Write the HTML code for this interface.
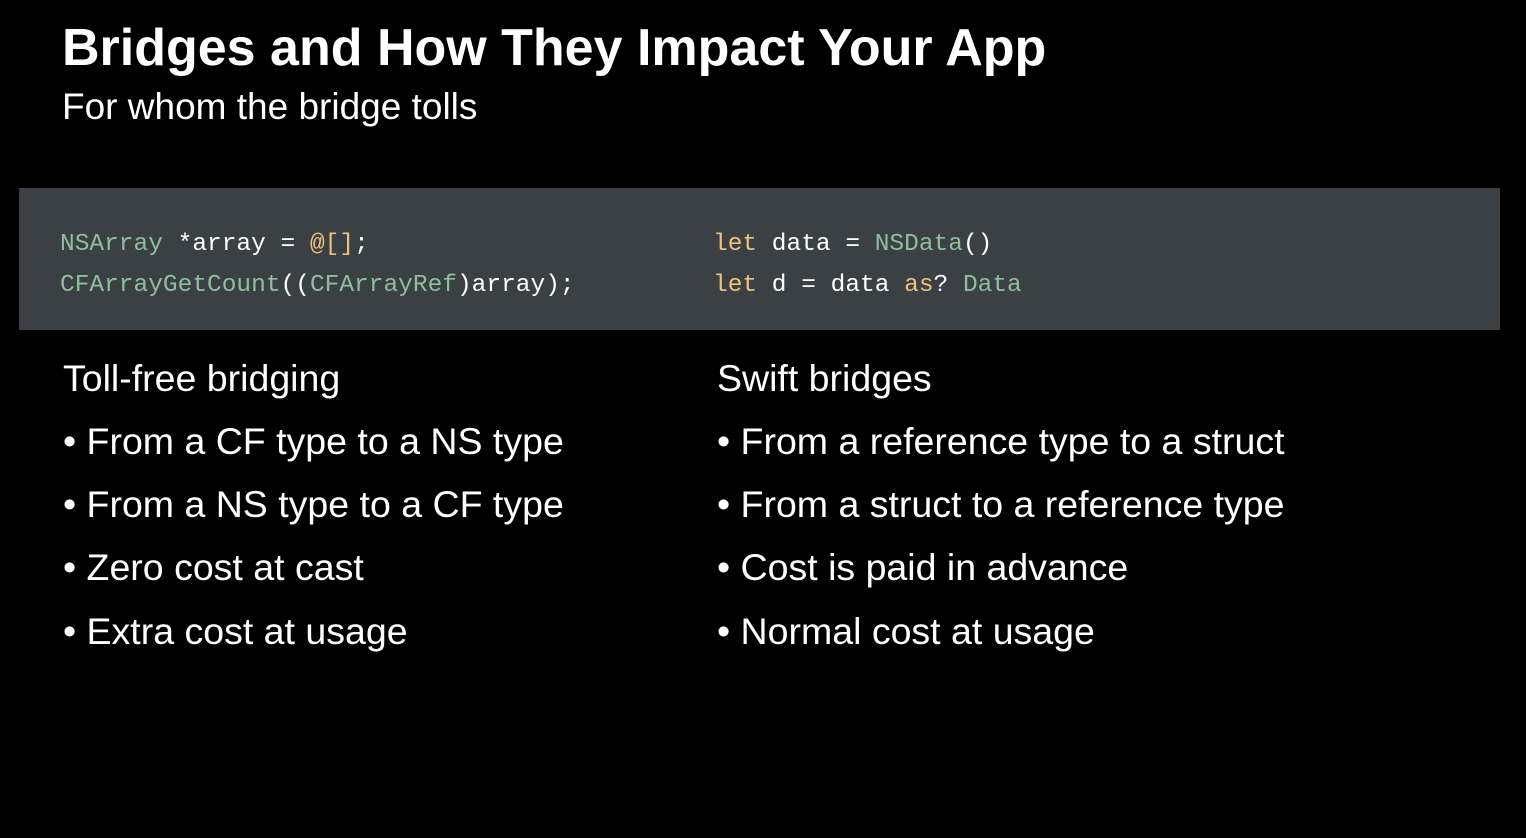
<!DOCTYPE html>
<html><head><meta charset="utf-8"><style>
body{margin:0;width:1526px;height:838px;background:#000;overflow:hidden;font-family:"Liberation Sans",sans-serif;color:#fff;position:relative}
.a{position:absolute;white-space:nowrap}
h1{position:absolute;left:62px;top:18px;margin:0;font-size:52px;font-weight:bold;letter-spacing:0}
.sub{left:62px;top:86px;font-size:37px}
.box{position:absolute;left:19px;top:188px;width:1481px;height:142px;background:#3b4045}
.code{font-family:"Liberation Mono",monospace;font-size:24.5px;line-height:41px;top:224px;color:#fff}
.g{color:#8fbf9a}.y{color:#eec27a}
.t{font-size:37.5px}
</style></head><body>
<h1>Bridges and How They Impact Your App</h1>
<div class="a sub">For whom the bridge tolls</div>
<div class="box"></div>
<div class="a code" style="left:60px"><span class="g">NSArray</span> *array = <span class="y">@[]</span>;<br><span class="g">CFArrayGetCount</span>((<span class="g">CFArrayRef</span>)array);</div>
<div class="a code" style="left:713px"><span class="y">let</span> data = <span class="g">NSData</span>()<br><span class="y">let</span> d = data <span class="y">as</span>? <span class="g">Data</span></div>
<div class="a t" style="left:63px;top:357px">Toll-free bridging</div>
<div class="a t" style="left:63px;top:420px">• From a CF type to a NS type</div>
<div class="a t" style="left:63px;top:483px">• From a NS type to a CF type</div>
<div class="a t" style="left:63px;top:546px">• Zero cost at cast</div>
<div class="a t" style="left:63px;top:610px">• Extra cost at usage</div>
<div class="a t" style="left:717px;top:357px">Swift bridges</div>
<div class="a t" style="left:717px;top:420px">• From a reference type to a struct</div>
<div class="a t" style="left:717px;top:483px">• From a struct to a reference type</div>
<div class="a t" style="left:717px;top:546px">• Cost is paid in advance</div>
<div class="a t" style="left:717px;top:610px">• Normal cost at usage</div>
</body></html>
